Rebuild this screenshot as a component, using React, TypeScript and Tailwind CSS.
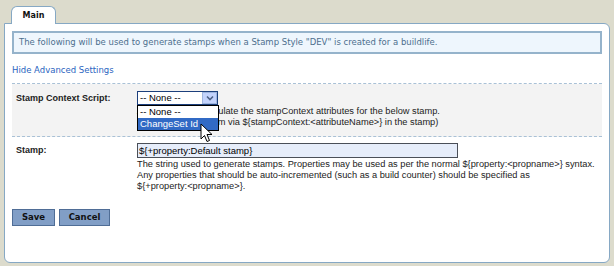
import React from "react";

function Cursor() {
  return (
    <svg width="13" height="20" viewBox="0 0 13 20" className="absolute left-[200px] top-[123px] z-30">
      <path d="M1 1 L1 16 L4.5 12.5 L7 18.5 L9.5 17.5 L7 11.5 L12 11.5 Z" fill="#fff" stroke="#000" strokeWidth="1" strokeLinejoin="miter" />
    </svg>
  );
}

export default function App() {
  return (
    <div className="relative w-[614px] h-[266px] bg-[#dcdbcc] pt-[6px] px-[4px] overflow-hidden font-['Liberation_Sans',Arial,sans-serif]">
      <div className="flex pl-[7px]">
        <div className="relative z-10 -mb-px w-[45px] h-[18px] bg-white border border-b-0 border-[#86a8c4] rounded-t-[6px] text-center font-['DejaVu_Sans',sans-serif] font-bold text-[8px] leading-[18px] text-[#111]">
          Main
        </div>
      </div>
      <div className="h-[240px] w-[606px] bg-white border border-[#86a8c4] rounded-[6px] rounded-tl-none px-[7px] pt-[7px]">
        <div className="h-[23px] border-2 border-[#95b3cb] bg-[#eef6fd] pl-[5px] font-['DejaVu_Sans',sans-serif] text-[8.5px] leading-[19px] text-[#4d6f8e]">
          The following will be used to generate stamps when a Stamp Style "DEV" is created for a buildlife.
        </div>
        <div className="mt-[11px] font-['DejaVu_Sans',sans-serif] text-[8.5px] leading-[10px] text-[#2a64c0]">
          Hide Advanced Settings
        </div>
        <div className="mt-[8px] border-t border-dashed border-[#a9c1d6]">
          <div className="relative flex h-[53px] bg-[#f3f3f3] border-b border-dashed border-[#a9c1d6]">
            <div className="w-[125px] pl-[4px] pt-[9px] font-bold text-[9px] leading-[11px] text-[#222]">
              Stamp Context Script:
            </div>
            <div className="pt-[7px]">
              <div className="flex h-[14px] w-[81px] border border-[#1c3f7c] bg-white">
                <div className="flex-1 pl-[2px] text-[9.5px] leading-[12px] text-[#000]">-- None --</div>
                <div className="w-[15px] h-[12px] border border-[#9fb6df] bg-[#c3d3fd] flex items-center justify-center">
                  <svg width="8" height="6" viewBox="0 0 8 6">
                    <path d="M1 1.5 L4 4.5 L7 1.5" fill="none" stroke="#4d6185" strokeWidth="1.6" />
                  </svg>
                </div>
              </div>
              <div className="pt-[1px] text-[9.25px] leading-[11px] text-[#222]">
                <div>A script used to populate the stampContext attributes for the below stamp.</div>
                <div>(Reference each item via ${"{"}stampContext:&lt;attributeName&gt;{"}"} in the stamp)</div>
              </div>
            </div>
            <div className="absolute left-[125px] top-[21px] z-20 w-[82px] h-[26px] border border-[#000] bg-white text-[9.5px] leading-[11px]">
              <div className="pl-[2px] h-[12px] text-[#000]">-- None --</div>
              <div className="pl-[2px] h-[12px] bg-[#316ac5] text-white">ChangeSet Id</div>
            </div>
          </div>
          <div className="flex pt-[6px]">
            <div className="w-[125px] pl-[4px] pt-[2px] font-bold text-[9px] leading-[11px] text-[#222]">
              Stamp:
            </div>
            <div>
              <div className="h-[15px] w-[321px] border border-[#4a4f58] bg-[#e6edfa] pl-[1px] text-[9.5px] leading-[13px] text-[#000]">
                ${"{"}+property:Default stamp{"}"}
              </div>
              <div className="pt-[1px] text-[9.25px] leading-[11px] text-[#222]">
                <div>The string used to generate stamps. Properties may be used as per the normal ${"{"}property:&lt;propname&gt;{"}"} syntax.</div>
                <div>Any properties that should be auto-incremented (such as a build counter) should be specified as</div>
                <div>${"{"}+property:&lt;propname&gt;{"}"}.</div>
              </div>
            </div>
          </div>
        </div>
        <div className="mt-[17px] flex gap-[4px] font-['DejaVu_Sans',sans-serif] font-bold text-[8.5px] text-[#111]">
          <button className="h-[17px] w-[43px] border border-[#4f6d96] bg-[#819ec6]">Save</button>
          <button className="h-[17px] w-[51px] border border-[#4f6d96] bg-[#819ec6]">Cancel</button>
        </div>
      </div>
      <Cursor />
    </div>
  );
}
